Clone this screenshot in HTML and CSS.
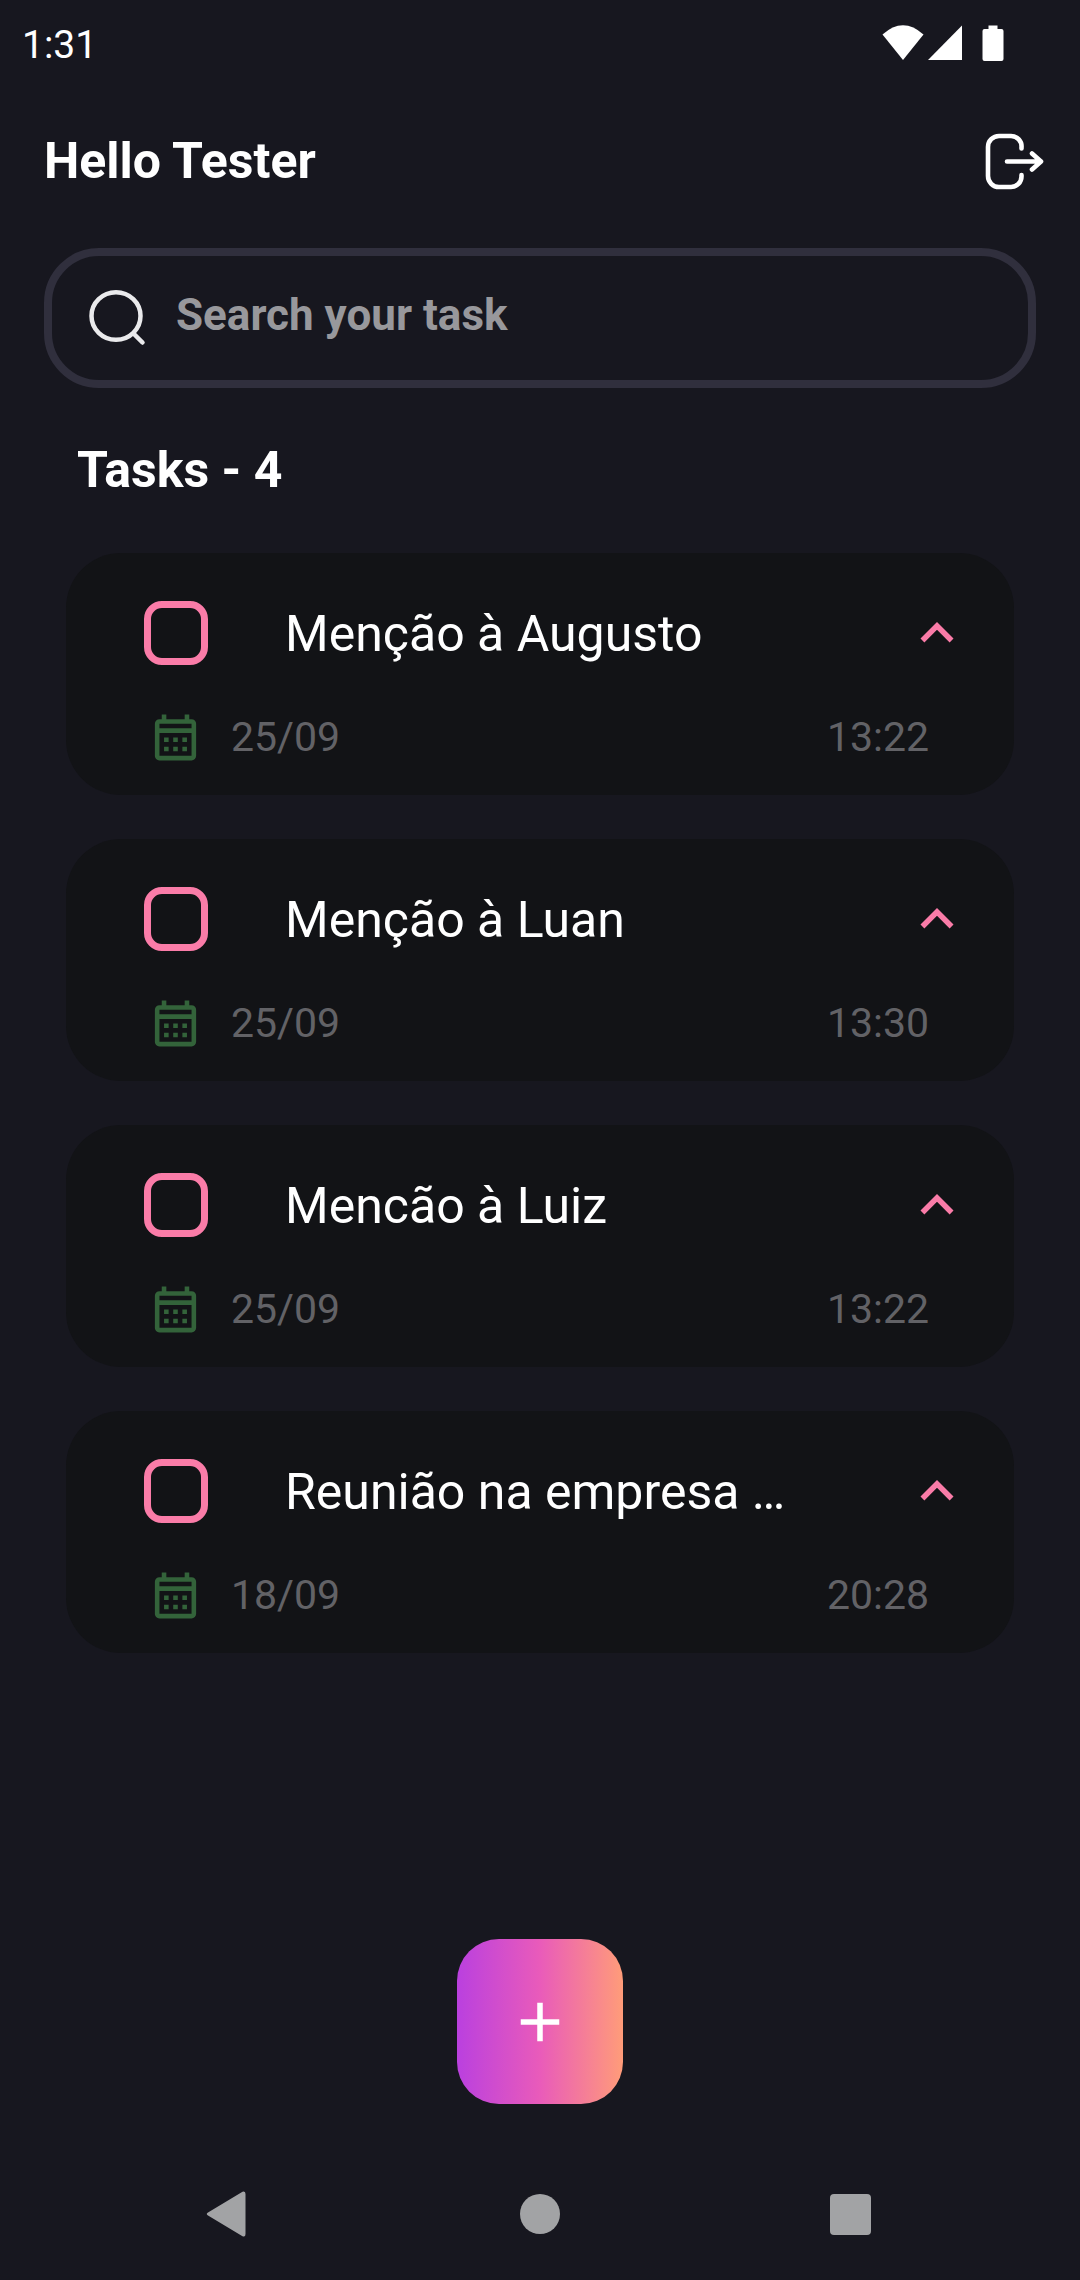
FILE: index.html
```html
<!DOCTYPE html>
<html lang="en">
<head>
<meta charset="utf-8">
<meta name="viewport" content="width=device-width, initial-scale=1">
<title>Tasks</title>
<link rel="stylesheet" href="styles.css">
</head>
<body>
<svg class="sprite" aria-hidden="true">
  <symbol id="calendar" viewBox="0 0 24 24"><path d="M7,12H9V14H7V12M21,6V20A2,2 0 0,1 19,22H5C3.89,22 3,21.1 3,20V6A2,2 0 0,1 5,4H6V2H8V4H16V2H18V4H19A2,2 0 0,1 21,6M5,8H19V6H5V8M19,20V10H5V20H19M15,14V12H17V14H15M11,14V12H13V14H11M7,16H9V18H7V16M15,18V16H17V18H15M11,18V16H13V18H11Z"/></symbol>
  <symbol id="chevron" viewBox="0 0 24 24"><path d="M7.41,15.41L12,10.83L16.59,15.41L18,14L12,8L6,14L7.41,15.41Z"/></symbol>
</svg>
<div class="app">
  <div class="status">
    <span class="clock">1:31</span>
    <div class="signals">
      <svg width="42" height="36" viewBox="0 0 42 36"><path d="M0.5 9.5Q21-9 41.500 9.500L21 35Z"/></svg>
      <svg width="36" height="36" viewBox="0 0 36 36"><path d="M35 0.500V35H1Z"/></svg>
      <svg class="battery" width="22" height="36" viewBox="0 0 22 36"><path d="M6.500 0.500h9V4H19.500a2 2 0 0 1 2 2V34a2 2 0 0 1-2 2H2.500a2 2 0 0 1-2-2V6a2 2 0 0 1 2-2H6.500Z"/></svg>
    </div>
  </div>
  <header class="header">
    <h1 class="heading">Hello Tester</h1>
    <button class="icon-button" type="button" aria-label="Log out">
      <svg width="60" height="60" viewBox="0 0 60 60" fill="none" stroke="#fff" stroke-width="4.600" stroke-linecap="round" stroke-linejoin="round"><path d="M37.500 17.500V16.500A10.500 10.500 0 0 0 27 5H15A11 11 0 0 0 4 16V45A11 11 0 0 0 15 56H27A10.500 10.500 0 0 0 37.500 45.500V44"/><path d="M23 30.500H57M48 22.500L57 30.500L48 38.500"/></svg>
    </button>
  </header>
  <label class="search">
    <svg width="58" height="58" viewBox="0 0 58 58" fill="none" stroke="#eaeaec" stroke-width="4.500" stroke-linecap="round"><ellipse cx="28" cy="27" rx="24.500" ry="23.700"/><path d="M45.500 44.500L54.500 53.500"/></svg>
    <input class="search-input" type="search" placeholder="Search your task" aria-label="Search your task">
  </label>
  <main class="main">
    <h2 class="heading list-heading">Tasks - 4</h2>
    <ul class="list">
      <li class="card">
        <div class="row">
          <input class="check" type="checkbox" id="t1">
          <label class="name" for="t1">Menção à Augusto</label>
          <button class="toggle" type="button" aria-label="Toggle details"><svg width="66" height="66"><use href="#chevron"/></svg></button>
        </div>
        <div class="meta"><svg width="55" height="55"><use href="#calendar"/></svg><time>25/09</time><time class="hour">13:22</time></div>
      </li>
      <li class="card">
        <div class="row">
          <input class="check" type="checkbox" id="t2">
          <label class="name" for="t2">Menção à Luan</label>
          <button class="toggle" type="button" aria-label="Toggle details"><svg width="66" height="66"><use href="#chevron"/></svg></button>
        </div>
        <div class="meta"><svg width="55" height="55"><use href="#calendar"/></svg><time>25/09</time><time class="hour">13:30</time></div>
      </li>
      <li class="card">
        <div class="row">
          <input class="check" type="checkbox" id="t3">
          <label class="name" for="t3">Mencão à Luiz</label>
          <button class="toggle" type="button" aria-label="Toggle details"><svg width="66" height="66"><use href="#chevron"/></svg></button>
        </div>
        <div class="meta"><svg width="55" height="55"><use href="#calendar"/></svg><time>25/09</time><time class="hour">13:22</time></div>
      </li>
      <li class="card">
        <div class="row">
          <input class="check" type="checkbox" id="t4">
          <label class="name" for="t4">Reunião na empresa …</label>
          <button class="toggle" type="button" aria-label="Toggle details"><svg width="66" height="66"><use href="#chevron"/></svg></button>
        </div>
        <div class="meta"><svg width="55" height="55"><use href="#calendar"/></svg><time>18/09</time><time class="hour">20:28</time></div>
      </li>
    </ul>
  </main>
  <button class="add" type="button" aria-label="Add task">
    <svg width="66" height="66" viewBox="0 0 24 24"><path d="M19,13H13V19H11V13H5V11H11V5H13V11H19V13Z"/></svg>
  </button>
  <nav class="system-nav" aria-label="System">
    <button type="button" aria-label="Back"><svg width="62" height="62" viewBox="0 0 62 62"><path d="M9 29.500L43.500 8.700Q46.500 7.500 46.500 11V51Q46.500 54.500 43.500 53.300L9 32.500Q6.500 31 9 29.500Z"/></svg></button>
    <button type="button" aria-label="Home"><svg width="62" height="62" viewBox="0 0 62 62"><circle cx="31" cy="31" r="20"/></svg></button>
    <button type="button" aria-label="Recents"><svg width="62" height="62" viewBox="0 0 62 62"><rect x="11" y="11" width="41" height="41" rx="4"/></svg></button>
  </nav>
</div>
</body>
</html>
```
FILE: styles.css
```css
* { box-sizing: border-box; }

body {
  margin: 0;
  background: #17171f;
  color: #fff;
  font-family: Roboto, sans-serif;
}

svg { display: block; flex: none; fill: currentColor; }
svg[fill="none"] { fill: none; }

.sprite { position: absolute; width: 0; height: 0; }

button {
  padding: 0;
  border: 0;
  background: none;
  color: inherit;
}

.app {
  display: flex;
  flex-direction: column;
  min-height: 100vh;
}

.status {
  display: flex;
  align-items: center;
  justify-content: space-between;
  height: 90px;
  padding: 0 76px 0 22px;
}

.clock { font-size: 39px; }

.signals {
  display: flex;
  gap: 3px;
  padding-bottom: 4px;
}

.battery { margin-left: 16px; }

.header {
  display: flex;
  align-items: center;
  justify-content: space-between;
  height: 142px;
  padding: 0 36px 0 44px;
}

.heading {
  margin: 0;
  font-size: 50px;
  font-weight: 700;
}

.search {
  display: flex;
  align-items: center;
  gap: 30px;
  height: 140px;
  margin: 16px 44px 0;
  padding: 0 36px;
  border: 8px solid #302f3d;
  border-radius: 55px;
}

.search-input {
  flex: 1;
  min-width: 0;
  padding: 0 0 6px;
  border: 0;
  outline: 0;
  background: none;
  color: #fff;
  font: 700 44px Roboto, sans-serif;
}

.search-input::placeholder { color: #98989c; opacity: 1; }

.main { padding: 0 66px; }

.list-heading {
  padding-left: 11px;
  line-height: 165px;
}

.list {
  display: flex;
  flex-direction: column;
  gap: 44px;
  margin: 0;
  padding: 0;
  list-style: none;
}

.card {
  display: flex;
  flex-direction: column;
  gap: 44px;
  padding: 47px 44px 30px 78px;
  border-radius: 55px;
  background: #121316;
}

.row { display: flex; align-items: center; }

.check {
  appearance: none;
  flex: none;
  width: 64px;
  height: 64px;
  margin: 0;
  border: 7px solid #fa7ca8;
  border-radius: 18px;
}

.check:checked { background: #fa7ca8; }

.name {
  flex: 1;
  min-width: 0;
  padding: 2px 0 0 77px;
  overflow: hidden;
  font-size: 50px;
  text-overflow: ellipsis;
  white-space: nowrap;
}

.toggle { color: #fa7ca8; }

.meta {
  display: flex;
  align-items: center;
  gap: 28px;
  padding: 0 41px 0 4px;
  color: #626266;
  font-size: 41px;
  line-height: 55px;
}

.meta svg { color: #33633a; }

.hour { margin-left: auto; }

.add {
  display: flex;
  align-items: center;
  justify-content: center;
  align-self: center;
  width: 166px;
  height: 165px;
  margin: auto 0 44px;
  border-radius: 42px;
  background: linear-gradient(90deg, #ba40df, #e95bba 50%, #ff9c79);
}

.system-nav {
  display: flex;
  align-items: center;
  justify-content: center;
  gap: 248px;
  height: 132px;
  color: #a2a3a5;
}
```
